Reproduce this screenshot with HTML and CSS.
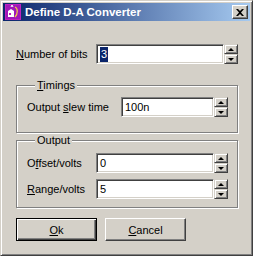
FILE: index.html
```html
<!DOCTYPE html>
<html>
<head>
    <meta charset="utf-8">
    <title>Define D-A Converter</title>
    <link rel="stylesheet" href="styles.css">
</head>
<body>
    <div class="window">
        <div class="titlebar">
            <svg class="app-icon" width="16" height="16" viewBox="0 0 16 16">
                <rect x="0" y="0" width="16" height="16" fill="#c020c0"/>
                <rect x="1" y="1" width="14" height="14" fill="#a018b8"/>
                <path d="M3 13 L3 7 L6 5 L9 7 L9 13 Z" fill="#ffffff"/>
                <path d="M6 3 L7 1 L8 3" stroke="#ffffff" stroke-width="1" fill="none"/>
                <path d="M10 3 C13 4 13 10 10 13" stroke="#f0d040" stroke-width="1.2" fill="none"/>
                <rect x="4" y="9" width="2" height="2" fill="#c020c0"/>
            </svg>
            <span class="title-text">Define D-A Converter</span>
            <div class="close-btn">
                <svg width="8" height="7" viewBox="0 0 8 7">
                    <path d="M0 0 L2 0 L4 2 L6 0 L8 0 L5 3.5 L8 7 L6 7 L4 5 L2 7 L0 7 L3 3.5 Z" fill="#000"/>
                </svg>
            </div>
        </div>

        <div class="content">
            <div class="row top-row">
                <span class="label"><u>N</u>umber of bits</span>
                <div class="spin wide">
                    <div class="field"><span class="selected">3</span></div>
                    <div class="updown">
                        <div class="arrow-btn"><span class="tri up"></span></div>
                        <div class="arrow-btn"><span class="tri down"></span></div>
                    </div>
                </div>
            </div>

            <fieldset class="group timings">
                <legend><u>T</u>imings</legend>
                <div class="row">
                    <span class="label">Output <u>s</u>lew time</span>
                    <div class="spin slew">
                        <div class="field">100n</div>
                        <div class="updown">
                            <div class="arrow-btn"><span class="tri up"></span></div>
                            <div class="arrow-btn"><span class="tri down"></span></div>
                        </div>
                    </div>
                </div>
            </fieldset>

            <fieldset class="group output">
                <legend>Output</legend>
                <div class="row">
                    <span class="label">O<u>f</u>fset/volts</span>
                    <div class="spin volts">
                        <div class="field">0</div>
                        <div class="updown">
                            <div class="arrow-btn"><span class="tri up"></span></div>
                            <div class="arrow-btn"><span class="tri down"></span></div>
                        </div>
                    </div>
                </div>
                <div class="row second">
                    <span class="label"><u>R</u>ange/volts</span>
                    <div class="spin volts">
                        <div class="field">5</div>
                        <div class="updown">
                            <div class="arrow-btn"><span class="tri up"></span></div>
                            <div class="arrow-btn"><span class="tri down"></span></div>
                        </div>
                    </div>
                </div>
            </fieldset>

            <div class="buttons">
                <div class="button default"><span><u>O</u>k</span></div>
                <div class="button"><span><u>C</u>ancel</span></div>
            </div>
        </div>
    </div>
</body>
</html>
```

FILE: styles.css
```css
body {
    margin: 0;
    background: #ffffff;
    font-family: "Liberation Sans", Arial, sans-serif;
    font-size: 11px;
    color: #000000;
}

.window {
    width: 253px;
    height: 256px;
    box-sizing: border-box;
    background: #D4D0C8;
    border: 1px solid;
    border-color: #D4D0C8 #404040 #404040 #D4D0C8;
    box-shadow: inset 1px 1px 0 #ffffff, inset -1px -1px 0 #808080;
    padding: 2px;
}

.titlebar {
    height: 18px;
    display: flex;
    align-items: center;
    background: linear-gradient(to right, #0A246A, #A6CAF0);
    padding-left: 2px;
    padding-right: 2px;
}

.app-icon {
    flex: none;
}

.title-text {
    flex: 1;
    color: #ffffff;
    font-weight: bold;
    font-size: 11.5px;
    margin-left: 4px;
    white-space: nowrap;
}

.close-btn {
    width: 16px;
    height: 14px;
    box-sizing: border-box;
    background: #D4D0C8;
    border: 1px solid;
    border-color: #ffffff #404040 #404040 #ffffff;
    box-shadow: inset -1px -1px 0 #808080;
    display: flex;
    align-items: center;
    justify-content: center;
}

.content {
    padding: 23px 12px 0 13px;
}

.row {
    display: flex;
    align-items: center;
    justify-content: space-between;
}

.label {
    white-space: nowrap;
}

.spin {
    display: flex;
    height: 20px;
}

.spin.wide {
    width: 142px;
}

.spin.slew {
    width: 107px;
}

.spin.volts {
    width: 132px;
}

.field {
    flex: 1;
    background: #ffffff;
    border: 1px solid;
    border-color: #808080 #ffffff #ffffff #808080;
    box-shadow: inset 1px 1px 0 #404040, inset -1px -1px 0 #D4D0C8;
    padding: 0 3px;
    display: flex;
    align-items: center;
}

.selected {
    background: #0A246A;
    color: #ffffff;
    padding: 0 1px;
    line-height: 15px;
}

.updown {
    width: 14px;
    display: flex;
    flex-direction: column;
}

.arrow-btn {
    flex: 1;
    box-sizing: border-box;
    background: #D4D0C8;
    border: 1px solid;
    border-color: #D4D0C8 #404040 #404040 #D4D0C8;
    box-shadow: inset 1px 1px 0 #ffffff, inset -1px -1px 0 #808080;
    display: flex;
    align-items: center;
    justify-content: center;
}

.tri {
    width: 0;
    height: 0;
    border-left: 3px solid transparent;
    border-right: 3px solid transparent;
}

.tri.up {
    border-bottom: 3px solid #000000;
}

.tri.down {
    border-top: 3px solid #000000;
}

.group {
    margin: 0;
    border: 1px solid #808080;
    box-shadow: inset 1px 1px 0 #ffffff, 1px 1px 0 #ffffff;
    padding: 0 9px 0 10px;
    width: 222px;
    box-sizing: border-box;
}

.group legend {
    padding: 0 2px;
    margin-left: 8px;
    background: #D4D0C8;
    line-height: 13px;
}

.timings {
    margin-top: 15px;
    padding-top: 5px;
    padding-bottom: 15px;
}

.output {
    margin-top: 1px;
    padding-top: 6px;
    padding-bottom: 8px;
}

.row.second {
    margin-top: 6px;
}

.buttons {
    display: flex;
    gap: 8px;
    margin-top: 10px;
}

.button {
    width: 81px;
    height: 23px;
    box-sizing: border-box;
    background: #D4D0C8;
    border: 1px solid;
    border-color: #ffffff #404040 #404040 #ffffff;
    box-shadow: inset -1px -1px 0 #808080;
    display: flex;
    align-items: center;
    justify-content: center;
}

.button.default {
    border: 1px solid #000000;
    box-shadow: inset 1px 1px 0 #ffffff, inset -1px -1px 0 #404040, inset -2px -2px 0 #808080;
}
```
